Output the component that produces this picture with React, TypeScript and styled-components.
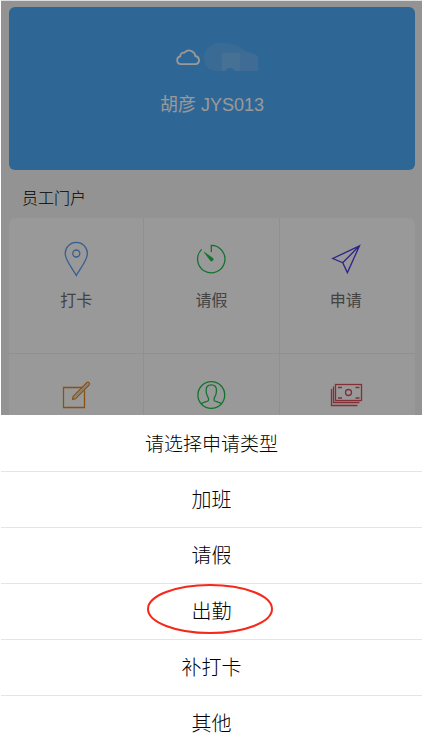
import React from "react";
import styled, { createGlobalStyle } from "styled-components";

const GlobalStyle = createGlobalStyle`
  * { box-sizing: border-box; }
  body {
    margin: 0;
    background: #fff;
    color: #000;
    font-family: "Liberation Sans", "Noto Sans CJK SC", sans-serif;
    font-weight: 300;
  }
  button { font: inherit; color: inherit; }
`;

const Screen = styled.div`
  height: 100vh;
  overflow: hidden;
  position: relative;
  border-top: 1px solid #dcdfdf;
  border-left: 1px solid #fff;
`;

const Portal = styled.main`
  min-height: 100%;
  padding: 6px 7px 0 8px;
  background: #f5f5f5;
`;

const Hero = styled.header`
  display: flex;
  flex-direction: column;
  align-items: center;
  gap: 21px;
  height: 163px;
  padding-top: 36px;
  border-radius: 6px;
  background: #4eaaf8;
  color: #fff;
`;

const Weather = styled.div`
  display: flex;
  align-items: center;
  gap: 3px;
  height: 28px;
  padding-left: 10px;
`;

const UserName = styled.div`
  font-size: 18px;
  line-height: 26px;
  font-weight: 400;
`;

const SectionTitle = styled.h2`
  margin: 0;
  padding: 17px 13px 7px;
  font-size: 16px;
  line-height: 24px;
  font-weight: 300;
`;

const Grid = styled.div`
  display: grid;
  grid-template-columns: repeat(3, 1fr);
  border-radius: 6px;
  overflow: hidden;
  background: #fff;
`;

const Tile = styled.button`
  display: flex;
  flex-direction: column;
  align-items: center;
  gap: 12px;
  height: 136px;
  padding: 23px 0 0;
  border: 0;
  border-right: 1px solid #f0f0f0;
  border-bottom: 1px solid #f0f0f0;
  background: none;
  color: #707070;
  font-size: 16px;
  line-height: 24px;
  font-weight: 400;

  &:nth-child(3n) {
    padding-right: 2px;
    border-right-color: transparent;
  }
`;

const Icon = styled.svg<{ $color: string }>`
  width: 36px;
  height: 36px;
  flex: none;
  fill: none;
  stroke: ${(p) => p.$color};
  stroke-width: 1.3;
`;

const Backdrop = styled.div`
  position: absolute;
  inset: 0;
  background: rgba(0, 0, 0, 0.4);
`;

const Sheet = styled.section`
  position: absolute;
  left: 0;
  right: 0;
  bottom: 0;
  display: flex;
  flex-direction: column;
  background: #fff;
`;

const SheetTitle = styled.h3`
  margin: 0;
  height: 56px;
  padding-top: 2px;
  font-size: 19px;
  line-height: 56px;
  font-weight: 300;
  text-align: center;
`;

const Option = styled.button`
  display: flex;
  align-items: center;
  justify-content: center;
  position: relative;
  height: 56px;
  padding: 0;
  border: 0;
  border-top: 1px solid #e5e5e5;
  background: none;
  font-size: 20px;
  line-height: 28px;
`;

const Ring = styled.svg`
  position: absolute;
  left: calc(50% - 66px);
  top: 0;
  width: 128px;
  height: 50px;
  fill: none;
  stroke: #f5281a;
  stroke-width: 2;
  overflow: visible;
`;

const tiles = [
  {
    id: "clock-in",
    label: "打卡",
    color: "#5c9ff0",
    art: (
      <>
        <path d="M18.3 34.5C15 28 7.2 19.5 7.2 12.5a11.1 11.1 0 0 1 22.2 0C29.4 19.5 21.6 28 18.3 34.5Z" />
        <circle cx="18.3" cy="12.5" r="3.5" />
      </>
    ),
  },
  {
    id: "leave",
    label: "请假",
    color: "#1fc04c",
    art: (
      <>
        <path d="M18.3 11V4.4A13.7 13.7 0 1 1 8.6 8.4" />
        <path d="M11 11l8.8 6.2a1.7 1.7 0 0 1-2.4 2.4Z" fill="#1fc04c" strokeWidth="0.6" />
      </>
    ),
  },
  {
    id: "apply",
    label: "申请",
    color: "#4a3fe0",
    art: <path d="M31.5 4.8L4.8 17.5l9.9 4.2 4.7 9.9ZM31.5 4.8L14.7 21.7" />,
  },
  {
    id: "edit",
    color: "#e08a1c",
    art: (
      <>
        <path d="M24.5 10.5H5.5v20h21V13.5" />
        <path d="M15.2 19.4L28.8 5.8a1.5 1.5 0 0 1 2.2 2.2L17.4 21.6l-2.8.7Z" />
        <path d="M16 20.8L29.5 7.3" strokeWidth="0.6" />
      </>
    ),
  },
  {
    id: "profile",
    color: "#1fc04c",
    art: (
      <>
        <circle cx="18.3" cy="18" r="13.4" />
        <path d="M8.3 26.8c1.8-1.7 5.2-1.8 7-3 .7-1 .3-2.4-.4-3.6-1.5-2.2-1.8-4-1.8-6.7 0-4 2-5.7 5.2-5.7s5.2 1.7 5.2 5.7c0 2.7-.3 4.5-1.8 6.7-.7 1.2-1.1 2.6-.4 3.6 1.8 1.2 5.2 1.3 7 3" />
      </>
    ),
  },
  {
    id: "money",
    color: "#d8505e",
    art: (
      <>
        <rect x="7.5" y="7.5" width="26" height="16" />
        <circle cx="20.5" cy="15.5" r="3" />
        <path d="M10 10.5h4M27.5 10.5h4M10 21h4M27.5 21h4M5.5 9.5v16h26M3.5 12v16.5h26" />
      </>
    ),
  },
];

const options = ["加班", "请假", "出勤", "补打卡", "其他"];

export default function App() {
  return (
    <>
      <GlobalStyle />
      <Screen>
        <Portal>
          <Hero>
            <Weather>
              <svg width="25" height="18" viewBox="0 0 25 18" fill="none" stroke="#fff" strokeWidth="1.8">
                <path d="M5 16.2a4 4 0 0 1-.7-7.9 3.6 3.6 0 0 1 4.2-3.7A6.2 6.2 0 0 1 19.3 8a4.2 4.2 0 0 1 .7 8.2Z" />
              </svg>
              <svg width="54" height="28" viewBox="0 0 54 28" fill="#fff">
                <path d="M0 15C0 6 7 0 18 0c14 0 18 5 26 9 4 1 8 2 10 4v15H31c-2-4-8-4-10 0H12C5 28 0 22 0 15Z" opacity="0.1" />
                <path d="M18 10h18v18h-5c-2-4-8-4-10 0h-3Z" opacity="0.14" />
                <path d="M36 10h10l8 3v15H36Z" opacity="0.05" />
              </svg>
            </Weather>
            <UserName>胡彦 JYS013</UserName>
          </Hero>
          <SectionTitle>员工门户</SectionTitle>
          <Grid>
            {tiles.map((t) => (
              <Tile key={t.id} type="button" aria-label={t.label ?? t.id}>
                <Icon $color={t.color} viewBox="0 0 36 36" aria-hidden="true">
                  {t.art}
                </Icon>
                {t.label}
              </Tile>
            ))}
          </Grid>
        </Portal>
        <Backdrop />
        <Sheet role="dialog" aria-labelledby="sheet-title">
          <SheetTitle id="sheet-title">请选择申请类型</SheetTitle>
          {options.map((label) => (
            <Option key={label} type="button">
              {label}
              {label === "出勤" && (
                <Ring viewBox="0 0 128 50" aria-hidden="true">
                  <ellipse cx="64" cy="25" rx="62" ry="24" />
                </Ring>
              )}
            </Option>
          ))}
        </Sheet>
      </Screen>
    </>
  );
}
